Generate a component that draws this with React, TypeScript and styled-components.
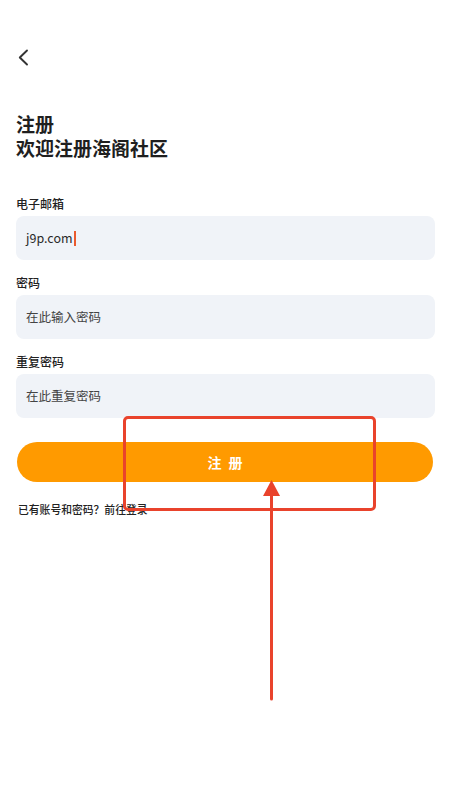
import React from "react";
import styled, { createGlobalStyle } from "styled-components";

const GlobalStyle = createGlobalStyle`
  html, body {
    margin: 0;
    padding: 0;
    background: #ffffff;
  }
  body {
    font-family: "Noto Sans CJK SC", "Noto Sans", "Liberation Sans", sans-serif;
    color: #222;
  }
  * { box-sizing: border-box; }
`;

const Screen = styled.div`
  position: relative;
  width: 450px;
  height: 800px;
  background: #fff;
  display: flex;
  flex-direction: column;
  padding: 0 16px;
`;

const TopBar = styled.div`
  height: 44px;
  margin-top: 35px;
  display: flex;
  align-items: flex-start;
`;

const BackButton = styled.button`
  width: 24px;
  height: 17px;
  padding: 0;
  border: none;
  background: none;
  display: flex;
  align-items: center;
  justify-content: flex-start;
  margin-left: 1px;
  margin-top: 14px;
`;

const Heading = styled.h1`
  margin: 33px 0 0;
  font-size: 19px;
  line-height: 24px;
  font-weight: 700;
  color: #1f1f1f;
`;

const Form = styled.form`
  margin-top: 35px;
  display: flex;
  flex-direction: column;
  gap: 14px;
`;

const Field = styled.label`
  display: flex;
  flex-direction: column;
  gap: 4px;
`;

const FieldLabel = styled.span`
  font-size: 12px;
  line-height: 17px;
  font-weight: 500;
  color: #222;
`;

const InputBox = styled.div`
  height: 44px;
  border-radius: 8px;
  background: #f0f3f8;
  display: flex;
  align-items: center;
  padding: 0 10px;
  width: 419px;
`;

const InputText = styled.span<{ $placeholder?: boolean }>`
  display: inline-flex;
  align-items: center;
  font-size: 12.5px;
  line-height: 16px;
  color: ${(p) => (p.$placeholder ? "#444" : "#2a2a2a")};
  font-weight: 400;
`;

const Caret = styled.span`
  display: inline-block;
  width: 2px;
  height: 15px;
  margin-left: 1px;
  background: #ea5a2e;
`;

const SubmitButton = styled.button`
  margin-top: 24px;
  margin-left: 1px;
  width: 416px;
  height: 40px;
  border: none;
  border-radius: 20px;
  background: #ff9a00;
  color: #fff;
  font-family: inherit;
  font-size: 14px;
  font-weight: 700;
  letter-spacing: 7px;
  text-indent: 7px;
  display: flex;
  align-items: center;
  justify-content: center;
`;

const LoginHint = styled.p`
  margin: 20px 0 0 2px;
  font-size: 10.8px;
  line-height: 15px;
  font-weight: 500;
  color: #222;
`;

/* Callout frame and arrow pointing at the submit button */
const CalloutFrame = styled.div`
  position: absolute;
  left: 123px;
  top: 416px;
  width: 253px;
  height: 95px;
  border: 3px solid #e9432c;
  border-radius: 5px;
  pointer-events: none;
`;

const CalloutArrow = styled.svg`
  position: absolute;
  left: 262px;
  top: 478px;
  pointer-events: none;
`;

const fields = [
  { label: "电子邮箱", value: "j9p.com", filled: true },
  { label: "密码", value: "在此输入密码", filled: false },
  { label: "重复密码", value: "在此重复密码", filled: false },
];

export default function App() {
  return (
    <>
      <GlobalStyle />
      <Screen>
        <TopBar>
          <BackButton type="button" aria-label="返回">
            <svg width="12" height="17" viewBox="0 0 12 17">
              <path
                d="M10 1.5 L2.8 8.5 L10 15.5"
                fill="none"
                stroke="#333"
                strokeWidth="1.9"
                strokeLinecap="round"
                strokeLinejoin="round"
              />
            </svg>
          </BackButton>
        </TopBar>

        <Heading>
          注册
          <br />
          欢迎注册海阁社区
        </Heading>

        <Form onSubmit={(e) => e.preventDefault()}>
          {fields.map((f) => (
            <Field key={f.label}>
              <FieldLabel>{f.label}</FieldLabel>
              <InputBox>
                <InputText $placeholder={!f.filled}>
                  {f.value}
                  {f.filled && <Caret />}
                </InputText>
              </InputBox>
            </Field>
          ))}
        </Form>

        <SubmitButton type="button">注册</SubmitButton>

        <LoginHint>已有账号和密码？前往登录</LoginHint>

        <CalloutFrame />
        <CalloutArrow width="20" height="224" viewBox="0 0 20 224">
          <path d="M9.5 2 L18 18 L1 18 Z" fill="#e9432c" />
          <line
            x1="9.5"
            y1="14"
            x2="9.5"
            y2="221"
            stroke="#e9432c"
            strokeWidth="3"
            strokeLinecap="round"
          />
        </CalloutArrow>
      </Screen>
    </>
  );
}
